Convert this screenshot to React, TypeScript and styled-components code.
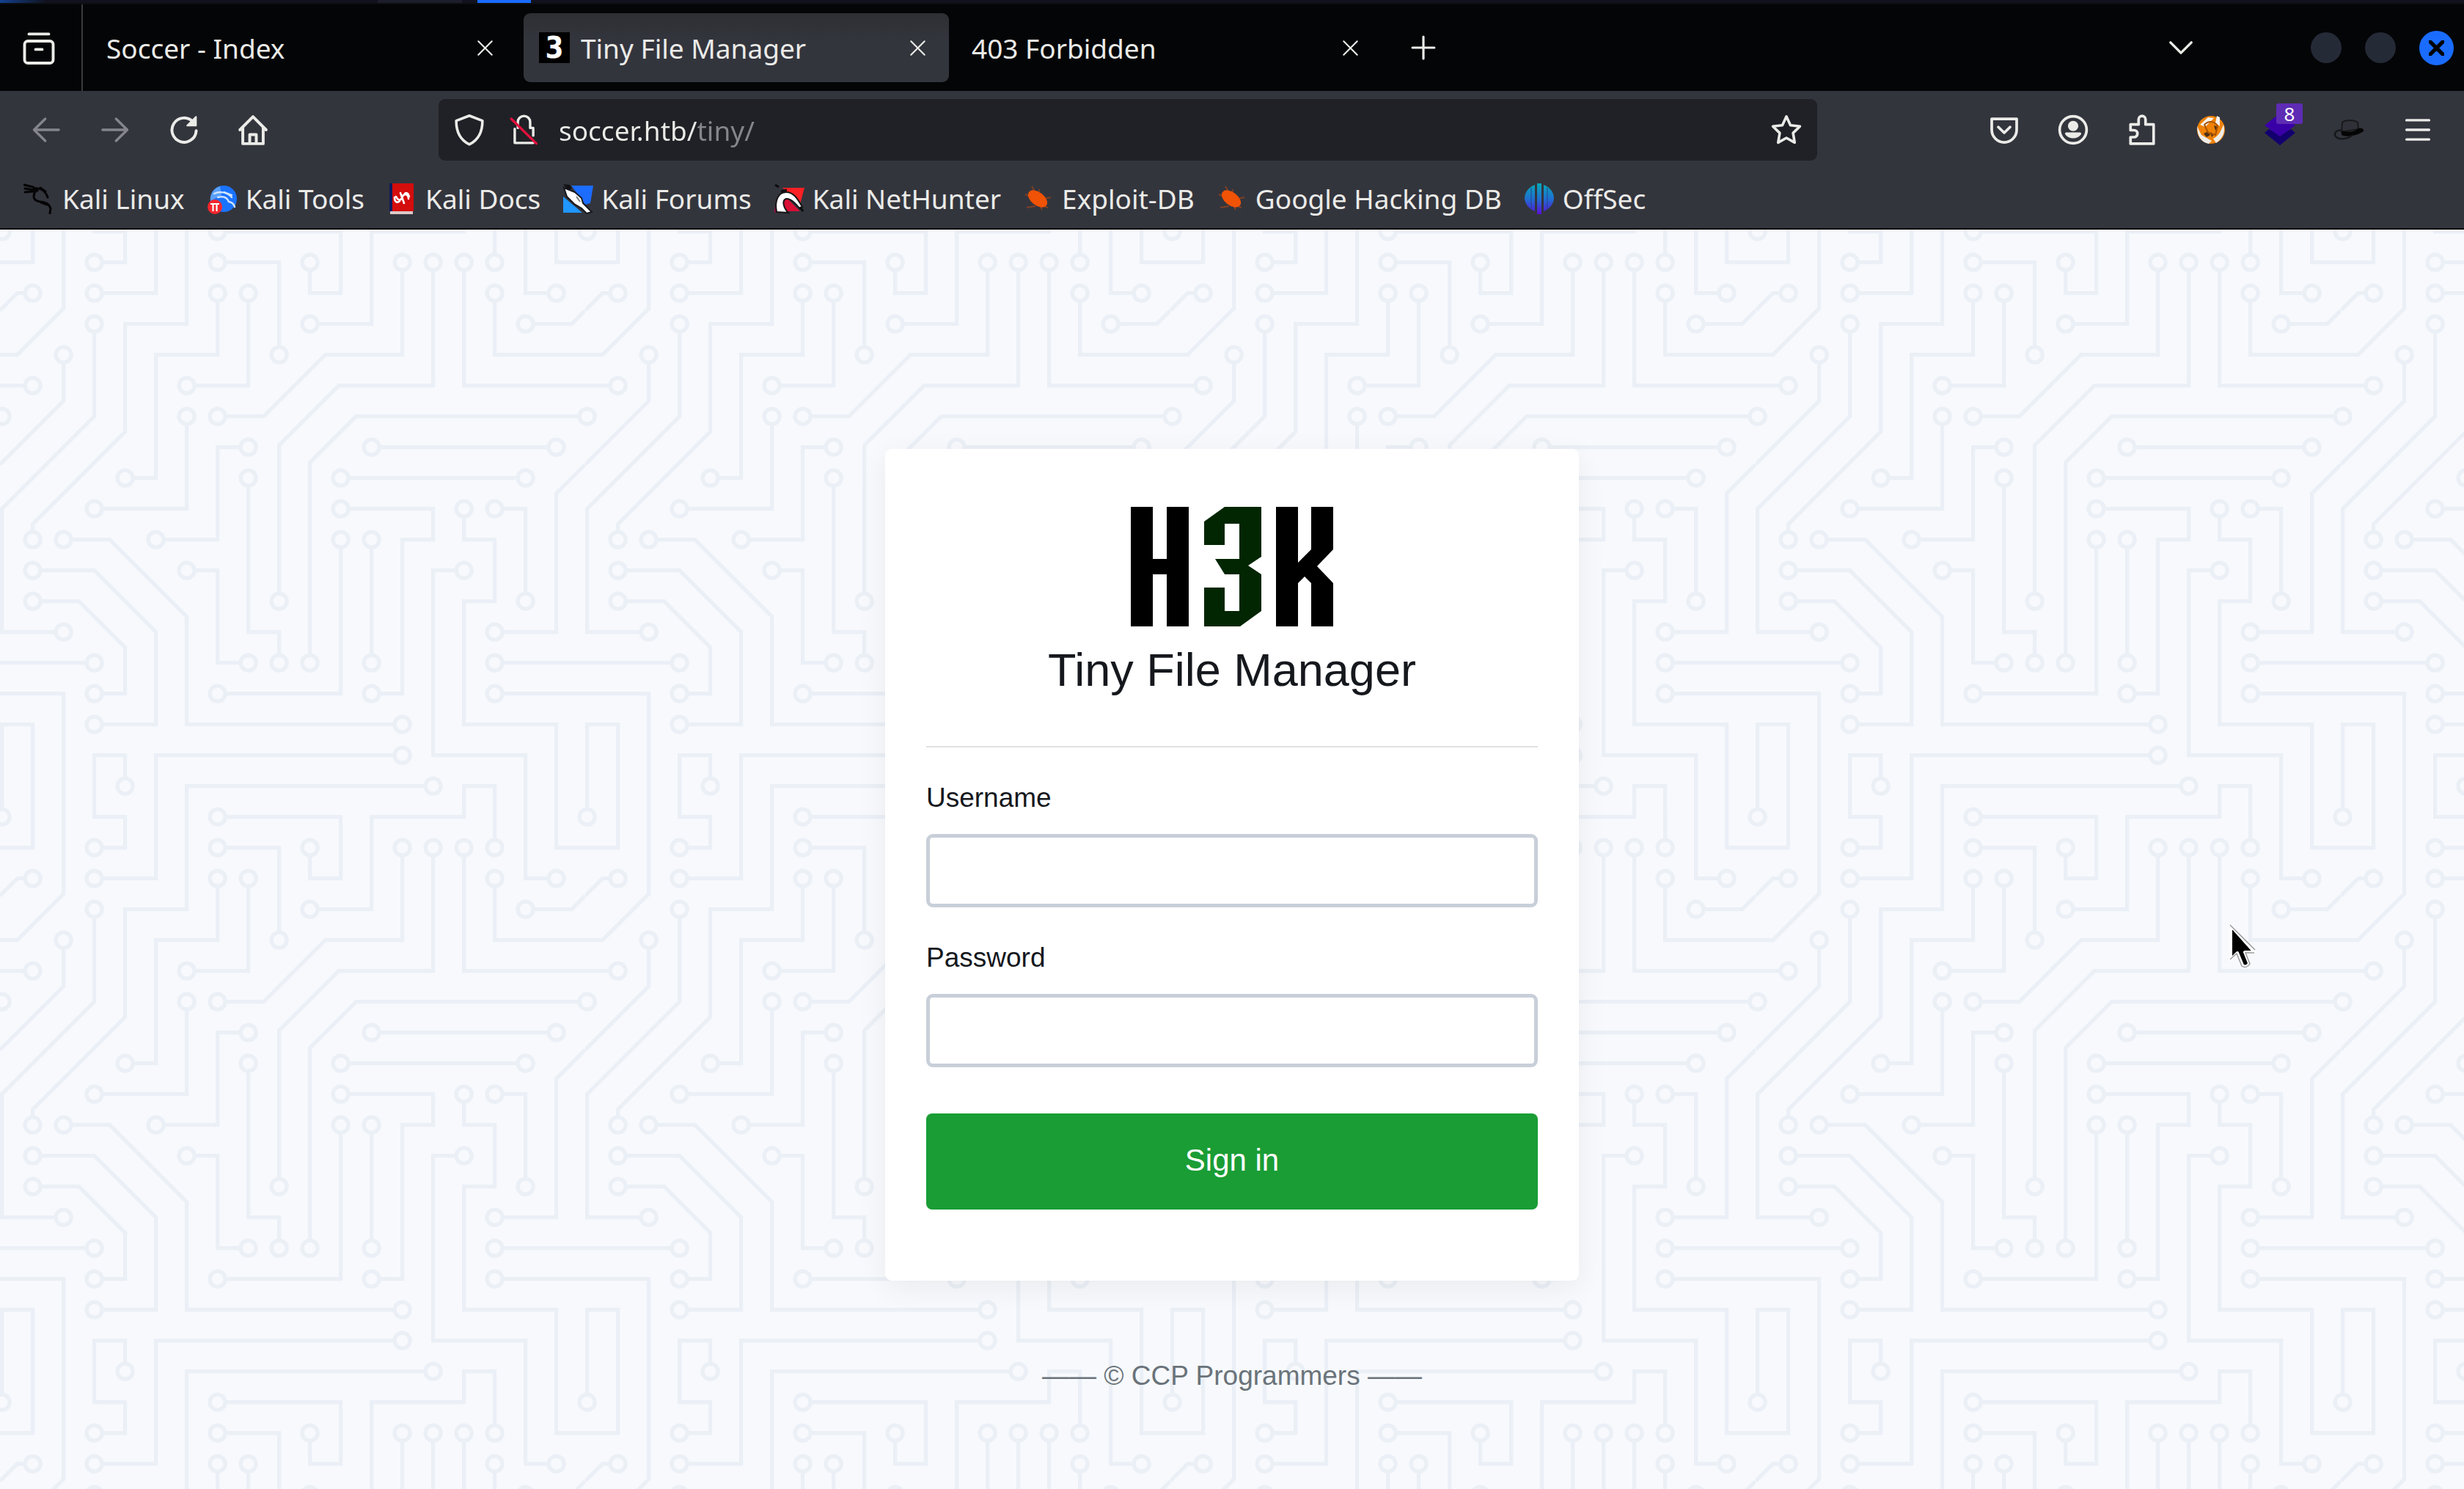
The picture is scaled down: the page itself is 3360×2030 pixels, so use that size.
import React from 'react';
import styled, { createGlobalStyle } from 'styled-components';

const color = {
  strip: '#11121d',
  tabBar: '#040507',
  chrome: '#33353d',
  field: '#202126',
  text: '#ebebe8',
  dim: '#85868c',
  accent: '#1a6cff',
  page: '#f7f9fc',
  trace: '#ebeff6',
  ink: '#15181d',
  border: '#c8cfd9',
  green: '#1a9d35',
  muted: '#6a737a',
};

const uiFont = '"Noto Sans", "Open Sans", sans-serif';
const pageFont = '"Liberation Sans", Arial, sans-serif';

/* ---------- circuit board wallpaper ---------- */

const TILE = 304;

/* Each trace runs between pads; an end that lies on the tile edge continues in the next tile. */
const traces = [
  '0,225 49,225',
  '81,304 81,273 209,273',
  '257,225 304,225',
  '257,241 304,241',
  '273,129 177,129',
  '0,81 17,81',
  '193,113 289,113',
  '257,17 257,0',
  '193,225 193,161',
  '241,17 241,81 304,81',
  '257,33 257,65 304,65',
  '129,129 129,209 145,209 145,225',
  '129,113 113,113 113,161 81,161',
  '113,241 177,241 177,161',
  '97,177 113,177 113,225 129,225',
  '65,289 65,273 49,273 49,304',
  '241,177 225,177 225,273 273,273 273,304',
  '257,145 273,145 273,193',
  '193,241 209,241 209,161 225,161 225,145 177,145',
  '289,33 273,33 273,0',
  '97,97 97,145 49,145',
  '49,33 81,33 81,0',
  '113,33 113,65 81,65 81,129 65,129',
  '97,81 129,81 129,33',
  '113,17 145,17 145,65',
  '225,289 97,289 97,304',
  '241,145 241,161 257,161 257,193 241,193 241,257 289,257 289,304',
  '49,17 65,17 65,1 49,1 49,0',
  '161,49 193,49 193,1 241,1 241,0',
  '241,304 241,289 257,289 257,304',
  '113,1 177,1 177,33 161,33 161,17',
  '113,97 137,97 169,65 209,65 209,17',
  '145,193 145,112 176,81 225,81 225,17',
  '161,225 161,121 185,97 305,97',
  '17,161 17,153 65,105 65,49 97,49 97,0',
  '49,49 49,97 1,145 1,209 33,209',
  '33,65 33,89 0,122',
  '257,209 289,209 289,137 304,122',
  '17,33 9,33 0,42',
  '273,49 297,49 304,42',
  '49,241 65,241 65,217 41,193 17,193',
  '209,257 97,257 97,201 57,161 33,161',
  '49,257 81,257 81,209 49,177 17,177',
  '33,0 33,41 9,65 0,65',
  '1,305 1,257 17,257 17,304',
  '33,304 33,241 0,241',
  '17,0 17,17 0,17',
  '304,17 289,17 289,0',
];

const onEdge = (v: number) => v === 0 || v === TILE;

function buildWallpaper() {
  const lines: string[] = [];
  const pads: string[] = [];
  traces.forEach((trace) => {
    const points = trace.split(' ').map((p) => p.split(',').map(Number));
    lines.push(`<polyline points='${trace}'/>`);
    [points[0], points[points.length - 1]].forEach(([x, y]) => {
      if (onEdge(x) || onEdge(y)) return;
      [-TILE, 0, TILE].forEach((dx) =>
        [-TILE, 0, TILE].forEach((dy) => {
          const cx = x + dx;
          const cy = y + dy;
          if (cx > -6 && cx < TILE + 6 && cy > -6 && cy < TILE + 6) {
            pads.push(`<circle cx='${cx}' cy='${cy}' r='4' fill='${color.page}'/>`);
          }
        }),
      );
    });
  });
  const svg =
    `<svg xmlns='http://www.w3.org/2000/svg' width='${TILE}' height='${TILE}' viewBox='0 0 ${TILE} ${TILE}'>` +
    `<g fill='none' stroke='${color.trace}' stroke-width='2'>${lines.join('')}${pads.join('')}</g></svg>`;
  return `url("data:image/svg+xml,${encodeURIComponent(svg).replace(/'/g, '%27')}")`;
}

const wallpaper = buildWallpaper();

/* ---------- layout ---------- */

const GlobalStyle = createGlobalStyle`
  *, *::before, *::after { box-sizing: border-box; }
  body { margin: 0; background: ${color.page}; }
  button, input { font: inherit; }
`;

const Screen = styled.div`
  min-height: 100vh;
  display: flex;
  flex-direction: column;
`;

const DesktopStrip = styled.div`
  display: flex;
  height: 6px;
  background: ${color.strip};
  border-bottom: 2px solid #0c0d10;
`;

const StripPart = styled.span<{ $width: number; $fill: string }>`
  width: ${(p) => p.$width}px;
  background: ${(p) => p.$fill};
`;

const TabBar = styled.div`
  display: flex;
  align-items: center;
  height: 118px;
  padding-right: 14px;
  background: ${color.tabBar};
  font-family: ${uiFont};
  font-size: 37px;
  color: ${color.text};
`;

const IconButton = styled.button<{ $width?: number }>`
  flex: none;
  display: flex;
  align-items: center;
  justify-content: center;
  position: relative;
  width: ${(p) => p.$width ?? 94}px;
  height: 84px;
  padding: 0;
  border: 0;
  background: none;
  color: ${color.text};

  &:disabled { color: ${color.dim}; }
`;

const ViewButton = styled(IconButton)`
  width: 113px;
  height: 100%;
  padding-right: 6px;
  border-right: 2px solid #3a3b3e;
  margin-right: 11px;
`;

const Tabs = styled.div`
  display: flex;
  gap: 10px;
`;

const Tab = styled.div<{ $active?: boolean }>`
  display: flex;
  align-items: center;
  width: 580px;
  height: 94px;
  padding: 0 10px 0 21px;
  border-radius: 9px;
  background: ${(p) => (p.$active ? `linear-gradient(#2e2f33, ${color.chrome} 40%)` : 'transparent')};
`;

const TabTitle = styled.button`
  flex: 1;
  display: flex;
  align-items: center;
  gap: 15px;
  padding: 0;
  border: 0;
  background: none;
  color: inherit;
  text-align: left;
  white-space: nowrap;
`;

const Favicon = styled.span`
  width: 42px;
  height: 42px;
  background: #000;
  color: #fff;
  font: bold 40px/42px "DejaVu Sans Condensed", "DejaVu Sans", sans-serif;
  text-align: center;
`;

const WindowButtons = styled.div`
  display: flex;
  align-items: center;
  gap: 32px;
  margin-left: auto;
`;

const ListTabs = styled(IconButton)`
  margin-right: 98px;
`;

const WindowButton = styled.button<{ $close?: boolean }>`
  display: flex;
  align-items: center;
  justify-content: center;
  width: ${(p) => (p.$close ? 47 : 42)}px;
  height: ${(p) => (p.$close ? 47 : 42)}px;
  padding: 0;
  border: 0;
  border-radius: 50%;
  background: ${(p) => (p.$close ? color.accent : '#252a37')};
`;

const Toolbar = styled.div`
  display: flex;
  align-items: center;
  height: 106px;
  padding: 0 16px;
  background: ${color.chrome};
`;

const Group = styled.div`
  display: flex;
`;

const AddressBar = styled.div`
  flex: 1;
  display: flex;
  align-items: center;
  height: 84px;
  margin: 0 208px 0 206px;
  padding: 0 1px 0 5px;
  border-radius: 9px;
  background: ${color.field};
  font-family: ${uiFont};
  font-size: 37px;
`;

const Address = styled.input`
  flex: 1;
  min-width: 0;
  height: 60px;
  padding: 0;
  margin-left: 11px;
  border: 0;
  outline: 0;
  color: ${color.text};
  background: linear-gradient(90deg, ${color.text} 188px, ${color.dim} 188px);
  background-clip: text;
  -webkit-background-clip: text;
  -webkit-text-fill-color: transparent;
`;

const Badge = styled.span`
  position: absolute;
  left: 42px;
  top: 6px;
  width: 36px;
  height: 28px;
  border-radius: 3px;
  background: #5e2cb4;
  color: #fff;
  font: 26px/28px ${uiFont};
  text-align: center;
`;

const Bookmarks = styled.nav`
  display: flex;
  align-items: center;
  gap: 30px;
  height: 83px;
  padding: 0 32px;
  border-bottom: 2px solid #000;
  background: ${color.chrome};
  font-family: ${uiFont};
  font-size: 37px;
`;

const Bookmark = styled.a`
  display: flex;
  align-items: center;
  gap: 11px;
  color: ${color.text};
  text-decoration: none;
  white-space: nowrap;
`;

const Page = styled.main`
  flex: 1;
  display: flex;
  flex-direction: column;
  align-items: center;
  padding-top: 299px;
  background: ${color.page} ${wallpaper} 0 0 / 798px 798px;
  font-family: ${pageFont};
  font-size: 37px;
  line-height: 56px;
  color: ${color.ink};
`;

const Card = styled.form`
  display: flex;
  flex-direction: column;
  width: 946px;
  padding: 79px 56px 97px;
  border-radius: 9px;
  background: #fff;
  box-shadow: 0 10px 42px rgba(0, 0, 0, 0.06);
`;

const Brand = styled.header`
  display: flex;
  flex-direction: column;
  align-items: center;
  gap: 21px;
  padding-bottom: 66px;
  border-bottom: 2px solid #dfe0e1;
  margin-bottom: 41px;
`;

const Title = styled.h1`
  margin: 0;
  font-size: 63px;
  line-height: 76px;
  font-weight: 400;
`;

const Field = styled.div`
  display: flex;
  flex-direction: column;
  gap: 21px;
  margin-bottom: 41px;
`;

const TextBox = styled.input`
  height: 100px;
  padding: 0 28px;
  border: 5px solid ${color.border};
  border-radius: 9px;
  background: #fff;
  color: ${color.ink};
`;

const SignIn = styled.button`
  height: 131px;
  margin-top: 22px;
  padding: 0 0 4px;
  border: 0;
  border-radius: 8px;
  background: ${color.green};
  color: #fff;
  font-size: 42px;
`;

const Footer = styled.footer`
  margin-top: 102px;
  color: ${color.muted};
`;

const Pointer = styled.svg`
  position: absolute;
  left: 3040px;
  top: 1260px;
`;

/* ---------- drawings ---------- */

type IconProps = { size?: number; children: React.ReactNode; width?: number };

const Line = ({ size = 42, width = 1.3, children }: IconProps) => (
  <svg
    width={size}
    height={size}
    viewBox="0 0 16 16"
    fill="none"
    stroke="currentColor"
    strokeWidth={width}
    strokeLinecap="round"
    strokeLinejoin="round"
    aria-hidden="true"
  >
    {children}
  </svg>
);

const Cross = ({ size = 21, width = 1.6 }: { size?: number; width?: number }) => (
  <Line size={size} width={width}>
    <path d="M1 1l14 14M15 1L1 15" />
  </Line>
);

const Bookmarked = ({ children }: { children: React.ReactNode }) => (
  <svg width={42} height={42} viewBox="0 0 42 42" aria-hidden="true">
    {children}
  </svg>
);

const Bug = () => (
  <Bookmarked>
    <g stroke="#7d4024" strokeWidth="2" fill="none">
      <path d="M12 4l5 9M22 8l-1 8M38 19l-9 2M3 15l9 4M5 33l12-2M26 36l-3-6M34 33l-6-2" />
    </g>
    <ellipse cx="20" cy="21" rx="15" ry="9" fill="#f05206" transform="rotate(38 20 21)" />
  </Bookmarked>
);

const bookmarks = [
  {
    label: 'Kali Linux',
    icon: (
      <Bookmarked>
        <g fill="none" stroke="#050506" strokeWidth="3" strokeLinecap="round" strokeLinejoin="round">
          <path d="M1 2l12 3 6 5M2 7l12 2M2 12l12-1" />
          <path d="M15 7c8-1 15 3 18 12M30 11l-7-5" />
          <path d="M17 10c-5 7-4 14 6 15 8 1 12 3 14 9l-1 7M24 26l8 3" />
        </g>
      </Bookmarked>
    ),
  },
  {
    label: 'Kali Tools',
    icon: (
      <Bookmarked>
        <circle cx="23" cy="21" r="18" fill="#1a73ff" />
        <path d="M5 24A18 18 0 0 1 18 4l2 12z" fill="#5aa0f8" />
        <g fill="none" stroke="#cfe4ff" strokeWidth="2.4" strokeLinecap="round">
          <path d="M10 14c8-4 18-2 24 5M15 19c8-2 13 1 15 6 5 1 7 3 8 7M24 12l10 4" />
        </g>
        <circle cx="11" cy="32" r="10" fill="#f3262c" />
        <path d="M5 28h12M8.500 28v10M13.500 28v10" stroke="#fff" strokeWidth="2.200" />
      </Bookmarked>
    ),
  },
  {
    label: 'Kali Docs',
    icon: (
      <Bookmarked>
        <path d="M6 0h31v38H6z" fill="#d40d0d" />
        <path d="M4 0h4v38H4z" fill="#0c1c5c" />
        <path d="M5 38h31v4H5z" fill="#dcc9c9" />
        <g fill="none" stroke="#fff" strokeWidth="2.600" strokeLinecap="round">
          <path d="M30 21c0-6-6-8-8-3s-5 7-9 0M19 13l5 14M11 19c0 7 4 8 7 5M31 18c-1-5-4-6-6-4" />
        </g>
      </Bookmarked>
    ),
  },
  {
    label: 'Kali Forums',
    icon: (
      <Bookmarked>
        <path d="M12 3h30l-4 24-7 2z" fill="#1c6cff" />
        <path d="M1 18l26 22H1z" fill="#1f97ff" />
        <path d="M2 6l15 6 9 8 2 7 12 12-7 2-7-7-10-6L6 18z" fill="#fff" stroke="#17191f" strokeWidth="2" />
        <path d="M1 1l9 1 3 5-6 2z" fill="#111215" />
        <path d="M19 18l5 7" stroke="#777b82" strokeWidth="2" />
      </Bookmarked>
    ),
  },
  {
    label: 'Kali NetHunter',
    icon: (
      <Bookmarked>
        <path d="M12 6h30l-6 22z" fill="#fb2024" />
        <path d="M2 38h34L18 20z" fill="#d90f35" />
        <path d="M1 32l5 8H1z" fill="#8c0f45" />
        <path
          d="M4 39C1 24 6 12 17 12c10 0 15 8 22 20l-3 3C29 26 23 20 17 21c-6 2-4 12 3 19z"
          fill="#fff"
          stroke="#1a1416"
          strokeWidth="2"
        />
        <path d="M2 2l5 3M10 11l8-2M36 32l4 6" stroke="#0c0c0e" strokeWidth="3" />
      </Bookmarked>
    ),
  },
  { label: 'Exploit-DB', icon: <Bug /> },
  { label: 'Google Hacking DB', icon: <Bug /> },
  {
    label: 'OffSec',
    icon: (
      <Bookmarked>
        <defs>
          <linearGradient id="offsec" gradientUnits="userSpaceOnUse" x1="0" y1="0" x2="0" y2="42">
            <stop offset="0" stopColor="#08a9b8" />
            <stop offset="0.5" stopColor="#1f6fd0" />
            <stop offset="1" stopColor="#5a0fd6" />
          </linearGradient>
        </defs>
        <g fill="url(#offsec)">
          <path d="M15 2v36c-6-2-14-9-14-18S9 4 15 2z" />
          <path d="M18 0h6v42h-6z" />
          <path d="M27 2v36c6-2 14-9 14-18S33 4 27 2z" />
        </g>
        <path d="M10 6v30M32 6v30" stroke="#23468c" strokeWidth="1" />
      </Bookmarked>
    ),
  },
];

/* The emblem is built from upright bars with bevelled joints. */
const Emblem = () => (
  <svg width={276} height={163} viewBox="0 0 276 163" role="img" aria-label="H3K">
    <g fill="#000">
      <rect x="0" y="0" width="30" height="163" />
      <rect x="49" y="0" width="30" height="163" />
      <rect x="30" y="71" width="19" height="21" />
      <rect x="198" y="0" width="30" height="163" />
      <rect x="246" y="0" width="30" height="58" />
      <rect x="246" y="104" width="30" height="59" />
      <path d="M246 58h30l-22 23 22 23h-30l-9-9-9 9V76z" />
    </g>
    <g fill="#022602">
      <rect x="128" y="0" width="50" height="23" />
      <rect x="148" y="23" width="30" height="45" />
      <rect x="148" y="92" width="30" height="50" />
      <rect x="100" y="110" width="28" height="53" />
      <rect x="100" y="20" width="28" height="32" />
      <path d="M100 20l28-20v23zM148 68h30l-18 12 18 12h-50l-13-21h33z" />
      <path d="M128 142h50l-29 21h-21z" />
    </g>
  </svg>
);

export default function App() {
  return (
    <Screen>
      <GlobalStyle />
      <DesktopStrip>
        <StripPart $width={64} $fill="linear-gradient(90deg, #12418f, #11121d)" />
        <StripPart $width={451} $fill="transparent" />
        <StripPart $width={115} $fill="#1c1e2a" />
        <StripPart $width={21} $fill="transparent" />
        <StripPart $width={73} $fill={color.accent} />
      </DesktopStrip>

      <TabBar>
        <ViewButton aria-label="Recent browsing">
          <Line size={48}>
            <rect x="1.500" y="5" width="13" height="10" rx="1.500" />
            <path d="M3.500 1.800h9M6.500 8.800h3" />
          </Line>
        </ViewButton>
        <Tabs>
          <Tab>
            <TabTitle>Soccer - Index</TabTitle>
            <IconButton $width={66} aria-label="Close tab"><Cross /></IconButton>
          </Tab>
          <Tab $active>
            <TabTitle>
              <Favicon>3</Favicon>
              Tiny File Manager
            </TabTitle>
            <IconButton $width={66} aria-label="Close tab"><Cross /></IconButton>
          </Tab>
          <Tab>
            <TabTitle>403 Forbidden</TabTitle>
            <IconButton $width={66} aria-label="Close tab"><Cross /></IconButton>
          </Tab>
        </Tabs>
        <IconButton $width={114} aria-label="New tab">
          <Line size={34} width={1.5}>
            <path d="M8 1v14M1 8h14" />
          </Line>
        </IconButton>
        <WindowButtons>
          <ListTabs aria-label="List all tabs">
            <Line size={38} width={1.4}>
              <path d="M2 5l6 6 6-6" />
            </Line>
          </ListTabs>
          <WindowButton aria-label="Minimize" />
          <WindowButton aria-label="Maximize" />
          <WindowButton $close aria-label="Close window">
            <Cross size={21} width={4} />
          </WindowButton>
        </WindowButtons>
      </TabBar>

      <Toolbar>
        <Group>
          <IconButton disabled aria-label="Back">
            <Line><path d="M14.500 8H2M7.500 2.300L1.700 8l5.800 5.700" /></Line>
          </IconButton>
          <IconButton disabled aria-label="Forward">
            <Line><path d="M1.500 8H14M8.500 2.300L14.300 8l-5.800 5.700" /></Line>
          </IconButton>
          <IconButton aria-label="Reload">
            <Line width={1.5}>
              <path d="M12.600 3.800A6.300 6.300 0 1 0 14.300 8.500" />
              <path d="M14.200 1.200v4.600H9.600z" fill="currentColor" strokeWidth="0.800" />
            </Line>
          </IconButton>
          <IconButton aria-label="Home">
            <Line width={1.5}>
              <path d="M1.200 8L8 1.200 14.800 8M2.700 6.800v8.400h10.600V6.800M6.300 15v-4.500h3.400V15" />
            </Line>
          </IconButton>
        </Group>

        <AddressBar>
          <IconButton $width={74} aria-label="Tracking protection">
            <Line size={44}>
              <path d="M8 1l6.500 2.500c0 5.500-2 9.500-6.500 11.700C3.500 13 1.500 9 1.500 3.500z" />
            </Line>
          </IconButton>
          <IconButton $width={74} aria-label="Connection is not secure">
            <Line size={42} width={1.3}>
              <path d="M5 7V4a3 3 0 0 1 6.400 0V7h1.600v4M3.400 7.500v7.300H13" />
              <path d="M1.600 2.300l13 12.800" stroke="#e2103c" />
            </Line>
          </IconButton>
          <Address aria-label="Address" defaultValue="soccer.htb/tiny/" />
          <IconButton $width={82} aria-label="Bookmark this page">
            <Line size={44} width={1.3}>
              <path d="M8 1.400l2 4.300 4.700.6-3.400 3.300.8 4.700L8 12l-4.100 2.300.8-4.700L1.300 6.300 6 5.700z" />
            </Line>
          </IconButton>
        </AddressBar>

        <Group>
          <IconButton aria-label="Save to Pocket">
            <Line size={40} width={1.5}>
              <path d="M1.200 2h13.600v6a6.800 6.800 0 0 1-13.600 0zM4.800 6.500L8 9.600l3.200-3.100" />
            </Line>
          </IconButton>
          <IconButton aria-label="Account">
            <Line width={1.4}>
              <circle cx="8" cy="8" r="7" />
              <circle cx="8" cy="6" r="2" fill="currentColor" />
              <path d="M4.500 10h7a4.500 4.500 0 0 1-7 0z" fill="currentColor" />
            </Line>
          </IconButton>
          <IconButton aria-label="Extensions">
            <Line size={42} width={1.4}>
              <path d="M2 5.200h4.200V2.600a1.800 1.800 0 0 1 3.600 0v2.600H14v10H2v-3.400h1.800a1.800 1.800 0 0 0 0-3.600H2z" />
            </Line>
          </IconButton>
          <IconButton aria-label="FoxyProxy">
            <svg width={42} height={42} viewBox="0 0 42 42" aria-hidden="true">
              <circle cx="21" cy="21" r="19" fill="#ef8207" />
              <path d="M6 14L17 4l8 1-12 12zM29 2l4 2v12l-6-5z" fill="#f6f3ee" />
              <path d="M2 16l6 12 14 8-4 4C8 38 2 30 2 16zM38 14c3 10-1 19-10 25l-4-6c8-4 10-10 14-19z" fill="#efece6" />
              <path d="M11 26l6-3 3 5-5 3zM25 15l5 2-3 5zM20 24l5 3-3 4z" fill="#4b3216" />
              <path d="M12 14c6-6 14-5 18 2l-3 12-10-3z" fill="none" stroke="#a85200" strokeWidth="2" />
            </svg>
          </IconButton>
          <IconButton aria-label="Wappalyzer, 8 technologies">
            <svg width={42} height={42} viewBox="0 0 42 42" aria-hidden="true">
              <path d="M0 25l6-5 15 8 15-8 6 5-21 17z" fill="#13006e" />
              <path d="M0 15L15 3l12 0 15 12-21 15z" fill="#3a00a8" />
            </svg>
            <Badge>8</Badge>
          </IconButton>
          <IconButton aria-label="Black hat extension">
            <svg width={42} height={42} viewBox="0 0 42 42" aria-hidden="true">
              <path d="M11 24l1-13c4-4 16-4 21 0l1 9z" fill="#303138" stroke="#18191c" strokeWidth="2" />
              <path d="M11 22c8 3 18 2 23-3 5-1 8 1 7 4-7 5-22 9-30 5z" fill="#050505" />
              <path d="M12 22C4 20 0 26 3 30c4 5 15 4 22-1" fill="none" stroke="#17181b" strokeWidth="2.500" />
            </svg>
          </IconButton>
          <IconButton aria-label="Menu">
            <Line size={38} width={1.4}>
              <path d="M1.500 2.500h13M1.500 8h13M1.500 13.500h13" />
            </Line>
          </IconButton>
        </Group>
      </Toolbar>

      <Bookmarks aria-label="Bookmarks">
        {bookmarks.map(({ label, icon }) => (
          <Bookmark key={label} href="#">
            {icon}
            {label}
          </Bookmark>
        ))}
      </Bookmarks>

      <Page>
        <Card onSubmit={(event) => event.preventDefault()}>
          <Brand>
            <Emblem />
            <Title>Tiny File Manager</Title>
          </Brand>
          <Field>
            <label htmlFor="username">Username</label>
            <TextBox id="username" type="text" />
          </Field>
          <Field>
            <label htmlFor="password">Password</label>
            <TextBox id="password" type="password" />
          </Field>
          <SignIn type="submit">Sign in</SignIn>
        </Card>
        <Footer>—— © CCP Programmers ——</Footer>
      </Page>

      <Pointer width={36} height={60} viewBox="0 0 36 60" aria-hidden="true">
        <path
          d="M2 2v46l9-9 7 17c3 3 8 1 9-3l-6-15h13z"
          fill="#000"
          stroke="#fff"
          strokeWidth="4"
          strokeLinejoin="round"
        />
        <path d="M1 1l34 34M1 48l9-8 7 17c4 3 9 1 11-3l-6-15h12" fill="none" stroke="#9a9a9c" strokeWidth="1.500" />
      </Pointer>
    </Screen>
  );
}
